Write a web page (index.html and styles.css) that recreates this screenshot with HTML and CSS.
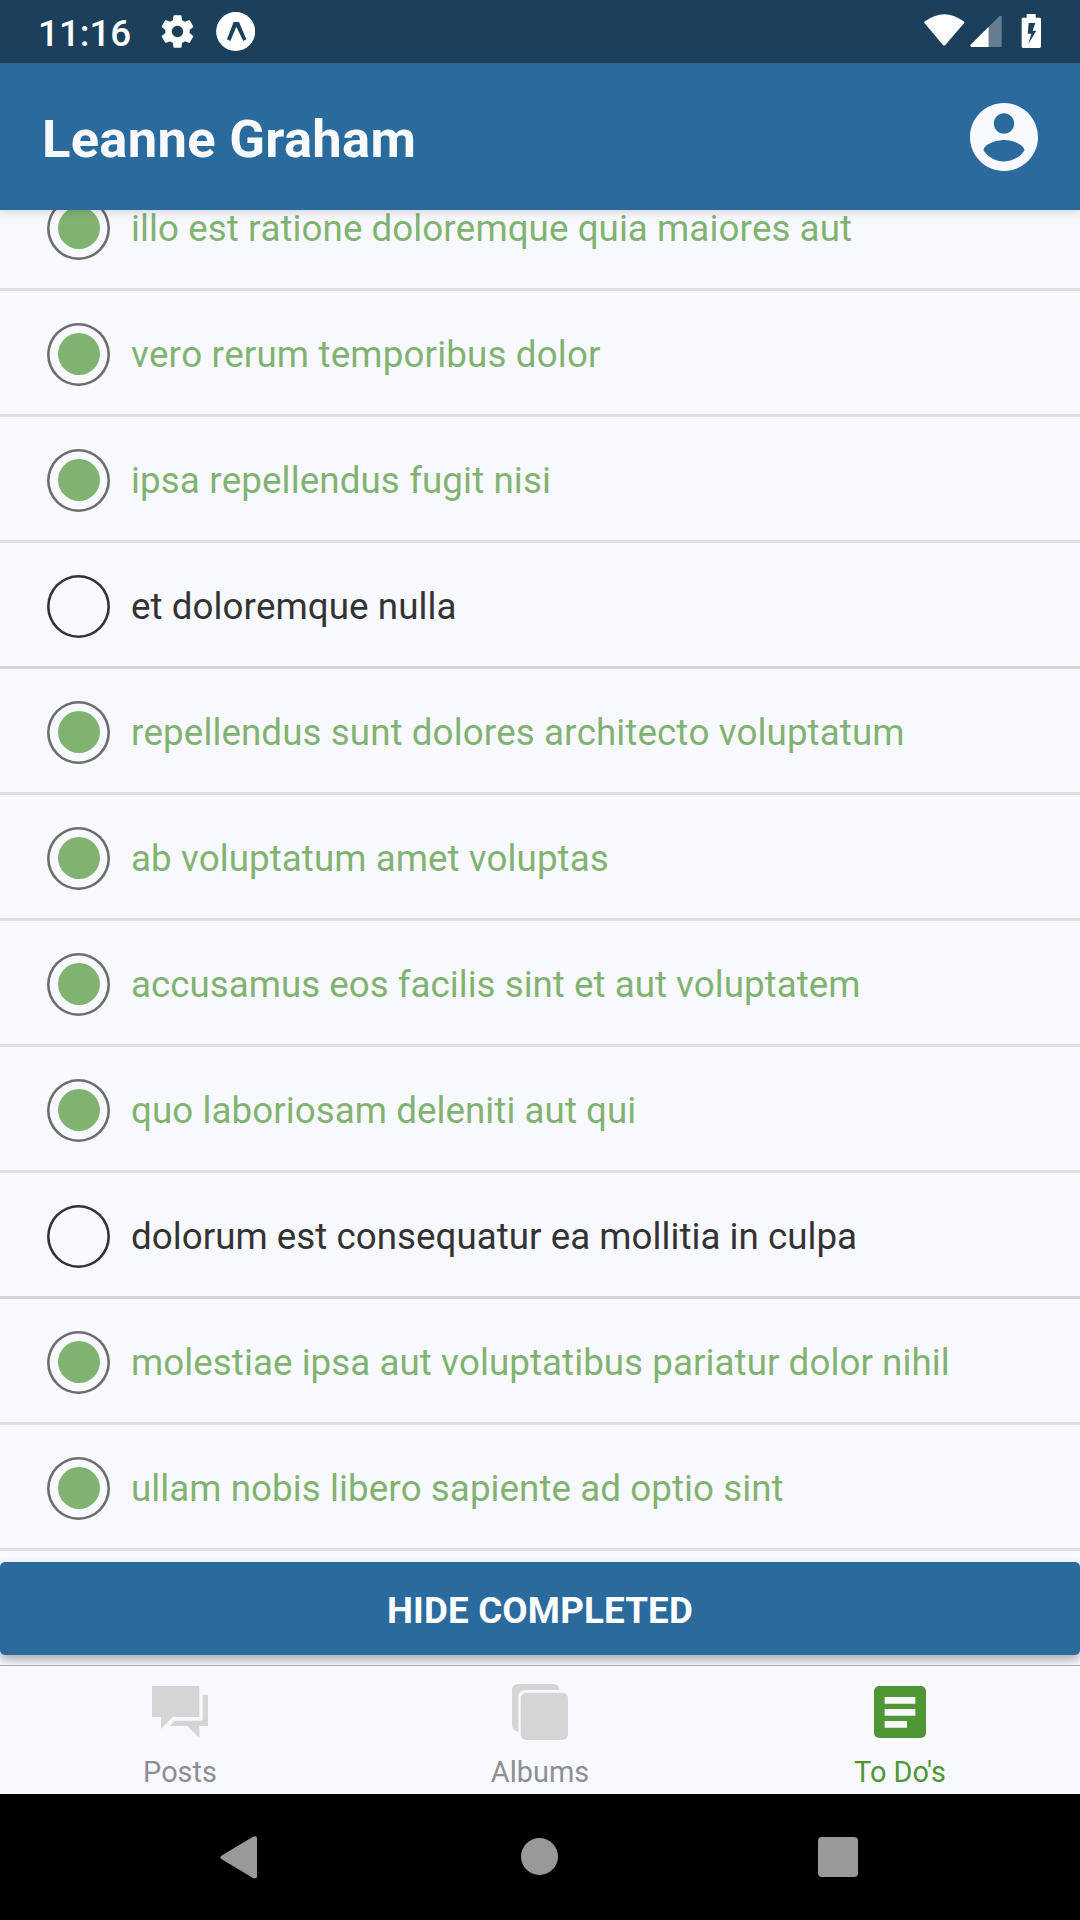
FILE: index.html
```html
<!DOCTYPE html>
<html lang="en">
<head>
<meta charset="utf-8">
<title>To Do's</title>
<link rel="stylesheet" href="styles.css">
</head>
<body>
<div class="screen">
  <div class="status">
    <span class="clock">11:16</span>
    <svg class="gear" viewBox="0 0 24 24"><path d="M19.43 12.98c.04-.32.07-.64.07-.98s-.03-.66-.07-.98l2.11-1.65c.19-.15.24-.42.12-.64l-2-3.46c-.12-.22-.39-.3-.61-.22l-2.49 1c-.52-.4-1.08-.73-1.69-.98l-.38-2.65C14.46 2.18 14.25 2 14 2h-4c-.25 0-.46.18-.49.42l-.38 2.65c-.61.25-1.17.59-1.69.98l-2.49-1c-.23-.09-.49 0-.61.22l-2 3.46c-.13.22-.07.49.12.64l2.11 1.65c-.04.32-.07.65-.07.98s.03.66.07.98l-2.11 1.65c-.19.15-.24.42-.12.64l2 3.46c.12.22.39.3.61.22l2.49-1c.52.4 1.08.73 1.69.98l.38 2.65c.03.24.24.42.49.42h4c.25 0 .46-.18.49-.42l.38-2.65c.61-.25 1.17-.59 1.69-.98l2.49 1c.23.09.49 0 .61-.22l2-3.46c.12-.22.07-.49-.12-.64l-2.11-1.65zM12 15.5c-1.93 0-3.5-1.57-3.5-3.5s1.57-3.5 3.5-3.5 3.5 1.57 3.5 3.5-1.57 3.5-3.5 3.5z"/></svg>
    <svg class="expo" viewBox="648 36 118 117"><circle cx="707" cy="94.500" r="58.500"/><path class="cut" d="M701 66h16l22 52-9 5-21-43-18 43-10-5z"/></svg>
    <svg class="signals" viewBox="130 36 360 114">
      <path d="M134 65Q194 20 254 65Q255 67 253 70L197 135Q194 138 190 135L135 70Q132 67 134 65z"/>
      <path class="dim" d="M327 80L359 49Q366 45 366 52V138Q366 141 363 141H327z"/>
      <path d="M327 80V141H276Q270 140 274 133z"/>
      <path fill-rule="evenodd" d="M441 42H468V53H480Q484 53 484 57V139Q484 144 480 144H430Q426 144 426 139V57Q426 53 430 53H441zM447 69L444 101H455L446 132L470 92H459L467 69z"/>
    </svg>
  </div>
  <header class="header">
    <h1 class="title">Leanne Graham</h1>
    <svg class="account" viewBox="2 2 20 20"><path d="M12 2C6.480 2 2 6.480 2 12s4.480 10 10 10 10-4.480 10-10S17.520 2 12 2zm0 3c1.660 0 3 1.340 3 3s-1.340 3-3 3-3-1.340-3-3 1.340-3 3-3zm0 14.200c-2.500 0-4.710-1.280-6-3.220.03-1.990 4-3.080 6-3.080 1.990 0 5.970 1.090 6 3.080-1.290 1.940-3.500 3.220-6 3.220z"/></svg>
  </header>
  <main class="content">
    <ul class="todos">
      <li class="todo done"><span class="radio"></span><span class="text">illo est ratione doloremque quia maiores aut</span></li>
      <li class="todo done"><span class="radio"></span><span class="text">vero rerum temporibus dolor</span></li>
      <li class="todo done"><span class="radio"></span><span class="text">ipsa repellendus fugit nisi</span></li>
      <li class="todo"><span class="radio"></span><span class="text">et doloremque nulla</span></li>
      <li class="todo done"><span class="radio"></span><span class="text">repellendus sunt dolores architecto voluptatum</span></li>
      <li class="todo done"><span class="radio"></span><span class="text">ab voluptatum amet voluptas</span></li>
      <li class="todo done"><span class="radio"></span><span class="text">accusamus eos facilis sint et aut voluptatem</span></li>
      <li class="todo done"><span class="radio"></span><span class="text">quo laboriosam deleniti aut qui</span></li>
      <li class="todo"><span class="radio"></span><span class="text">dolorum est consequatur ea mollitia in culpa</span></li>
      <li class="todo done"><span class="radio"></span><span class="text">molestiae ipsa aut voluptatibus pariatur dolor nihil</span></li>
      <li class="todo done"><span class="radio"></span><span class="text">ullam nobis libero sapiente ad optio sint</span></li>
    </ul>
    <button class="toggle" type="button">HIDE COMPLETED</button>
  </main>
  <nav class="tabs">
    <a class="tab">
      <svg class="tab-icon" viewBox="450 426 180 180"><path d="M456 438H598V531H518L483 567V531H456z"/><path d="M608 464H624V558H598V593L562 558H509L525 542H601Q608 542 608 535z"/></svg>
      <span>Posts</span>
    </a>
    <a class="tab">
      <svg class="tab-icon" viewBox="330 426 180 180"><path d="M354 432H461Q477 433 479 450H375Q356 452 355 471V575Q337 573 336 556V450Q337 433 354 432z"/><rect x="362" y="458" width="142" height="142" rx="17"/></svg>
      <span>Albums</span>
    </a>
    <a class="tab active">
      <svg class="tab-icon" viewBox="210 426 180 180"><path fill-rule="evenodd" d="M239 438H361Q378 438 378 455V577Q378 594 361 594H239Q222 594 222 577V455Q222 438 239 438zM254 471V491H346V471zM254 507V527H346V507zM254 543V563H321V543z"/></svg>
      <span>To Do's</span>
    </a>
  </nav>
  <div class="system">
    <svg class="back" viewBox="59 167 113 129"><path d="M158 169Q170 164 171 176V286Q170 297 158 293L63 236Q57 231 63 226z"/></svg>
    <span class="home"></span>
    <span class="recent"></span>
  </div>
</div>
</body>
</html>
```
FILE: styles.css
```css
* { box-sizing: border-box; }
body {
  margin: 0;
  background: #f8f9ff;
  font-family: Roboto, sans-serif;
}
svg { display: block; fill: currentColor; }
.screen {
  display: flex;
  flex-direction: column;
  width: 1080px;
  height: 1920px;
  overflow: hidden;
}
.status {
  display: flex;
  align-items: flex-start;
  flex: 0 0 63px;
  padding: 12px 37px 0 38px;
  background: #1c405c;
  color: #fff;
}
.clock {
  width: 120px;
  font-size: 36.75px;
  font-weight: 500;
  line-height: 43px;
  white-space: nowrap;
}
.gear { width: 39px; height: 39px; }
.expo { width: 39.33px; height: 39px; margin-left: 19px; }
.cut { fill: #1c405c; }
.signals { width: 120px; height: 38px; margin-left: auto; }
.dim { opacity: 0.32; }
.header {
  position: relative;
  z-index: 1;
  display: flex;
  align-items: center;
  justify-content: space-between;
  flex: 0 0 147px;
  padding: 0 42px;
  background: #2b6a9c;
  color: #f8f9ff;
  box-shadow: 0 1px 10px rgba(0, 0, 0, 0.18);
}
.title {
  margin: 5px 0 0;
  font-size: 52.5px;
  font-weight: 700;
  line-height: 62px;
  letter-spacing: 0.3px;
}
.account { width: 68px; height: 68px; }
.content {
  display: flex;
  flex-direction: column;
  flex: 0 0 1455px;
  overflow: hidden;
}
.todos { margin: -45px 0 11px; padding: 0; list-style: none; }
.todo {
  display: flex;
  align-items: center;
  gap: 21px;
  height: 126px;
  padding: 4px 47px 0;
  border-bottom: 3px solid #d3d3d3;
  color: #333;
}
.done { opacity: 0.7; }
.radio {
  width: 63px;
  height: 63px;
  padding: 10px 11px;
  border-radius: 50%;
  box-shadow: inset 0 0 0 2.6px #333;
}
.done .radio::before {
  content: "";
  display: block;
  width: 42px;
  height: 42px;
  border-radius: 50%;
  background: #4f9635;
}
.text {
  font-size: 36.75px;
  line-height: 37px;
  font-kerning: none;
  letter-spacing: 0.05px;
  white-space: nowrap;
}
.todo:nth-child(2) .text { letter-spacing: 0.15px; }
.todo:nth-child(3) .text { letter-spacing: 0.1px; }
.todo:nth-child(5) .text { letter-spacing: 0.08px; }
.todo:nth-child(7) .text { letter-spacing: 0; }
.todo:nth-child(9) .text { letter-spacing: 0.02px; }
.done .text { color: #4f9635; }
.toggle {
  flex: 0 0 93px;
  padding: 3px 0 0;
  border: 0;
  border-radius: 5px;
  background: #2b6a9c;
  box-shadow: 0 5px 10px rgba(0, 0, 0, 0.3);
  color: #fff;
  font: 700 36.75px/43px Roboto, sans-serif;
  letter-spacing: 0.15px;
}
.tabs {
  display: flex;
  flex: 0 0 129px;
  border-top: 1px solid #a9a9b0;
}
.tab {
  display: flex;
  flex: 1;
  flex-direction: column;
  align-items: center;
  padding-top: 16px;
  color: #8e8e93;
  font-size: 28.9px;
  line-height: 34px;
}
.tab-icon { width: 60px; height: 60px; margin-bottom: 13px; color: #d5d5d5; }
.active, .active .tab-icon { color: #4f9635; }
.system {
  display: flex;
  align-items: center;
  flex: 0 0 126px;
  padding: 0 222px 0 219.5px;
  background: #000;
  color: #999;
}
.back { width: 37.67px; height: 43px; }
.home { width: 37px; height: 37px; margin: 0 0 1px 264px; border-radius: 50%; background: #999; }
.recent { width: 40px; height: 40px; margin: 0 0 0 auto; border-radius: 4px; background: #999; }
```
